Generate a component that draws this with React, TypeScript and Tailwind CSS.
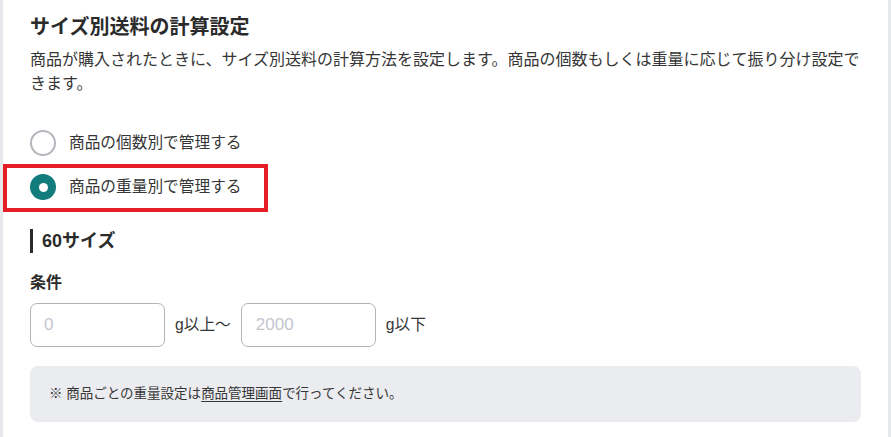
import React from 'react';

const RadioRow = ({ label, checked }: { label: string; checked?: boolean }) => (
  <label className="flex h-[44px] items-center gap-[13px]">
    {checked ? (
      <span className="flex size-[26px] items-center justify-center rounded-full bg-[#127b7b]">
        <span className="size-[9px] rounded-full bg-white" />
      </span>
    ) : (
      <span className="size-[26px] rounded-full border-2 border-[#b5b6bd] bg-white" />
    )}
    <span className="text-[15.7px] text-[#363636]">{label}</span>
  </label>
);

const App = () => {
  return (
    <div className="flex min-h-screen bg-white font-['Liberation_Sans','Noto_Sans_CJK_JP',sans-serif]">
      <div className="w-[3px] shrink-0 bg-[#e7e8ec]" />

      <main className="flex-1 px-[27px] pt-[13px]">
        <h2 className="text-[20px] leading-[28px] font-bold text-[#2b2b2b]">
          サイズ別送料の計算設定
        </h2>
        <p className="mt-[7px] text-[16px] leading-[24px] text-[#363636]">
          商品が購入されたときに、サイズ別送料の計算方法を設定します。商品の個数もしくは重量に応じて振り分け設定できます。
        </p>

        <div className="mt-[25px]">
          <RadioRow label="商品の個数別で管理する" />
          <div className="relative">
            <RadioRow label="商品の重量別で管理する" checked />
            {/* annotation box */}
            <div className="pointer-events-none absolute -top-[1px] -bottom-[3px] -left-[27px] w-[265px] border-4 border-[#e51e25]" />
          </div>
        </div>

        <div className="mt-[20px] flex h-[24px] items-center">
          <span className="h-[24px] w-[3px] bg-[#2b2b2b]" />
          <h3 className="ml-[9px] text-[18px] font-bold text-[#2b2b2b]">60サイズ</h3>
        </div>

        <p className="mt-[19px] text-[16px] leading-[22px] font-bold text-[#2b2b2b]">条件</p>

        <div className="mt-[9px] flex items-center">
          <input
            placeholder="0"
            className="h-[44px] w-[135px] rounded-[7px] border border-[#b3b4bb] px-[13px] text-[17px] text-[#363636] outline-none placeholder:text-[#c3c6cf]"
          />
          <span className="mx-[10px] text-[15.7px] text-[#363636]">g以上〜</span>
          <input
            placeholder="2000"
            className="h-[44px] w-[135px] rounded-[7px] border border-[#b3b4bb] px-[14px] text-[17px] text-[#363636] outline-none placeholder:text-[#c3c6cf]"
          />
          <span className="ml-[10px] text-[15.7px] text-[#363636]">g以下</span>
        </div>

        <div className="mt-[19px] flex h-[56px] items-center rounded-[8px] bg-[#ebecf0] px-[19px] text-[13.5px] text-[#363636]">
          <span>
            ※ 商品ごとの重量設定は<span className="underline underline-offset-[3px]">商品管理画面</span>で行ってください。
          </span>
        </div>
      </main>

      <div className="w-[3px] shrink-0 bg-[#e7e8ec]" />
    </div>
  );
};

export default App;
